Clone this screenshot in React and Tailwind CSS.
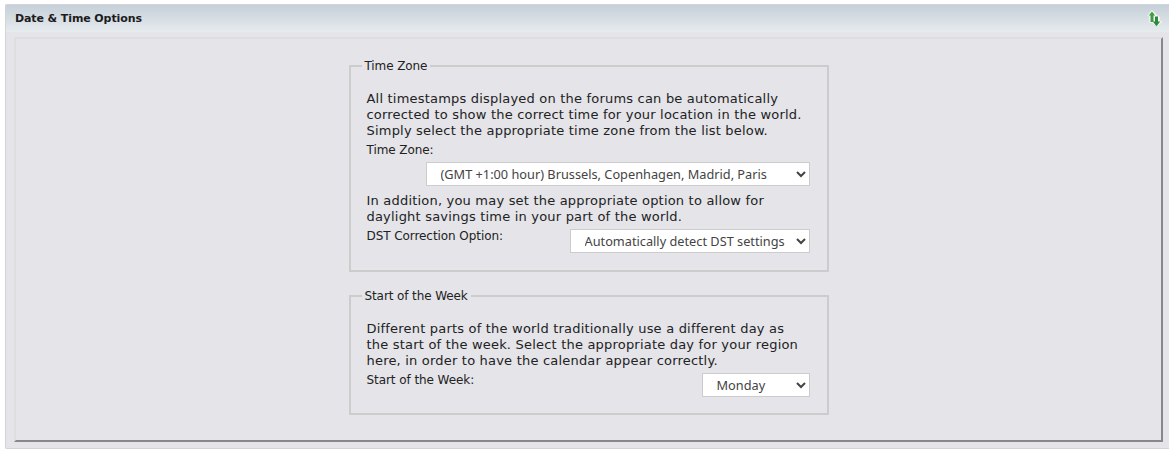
function SortIcon() {
  return (
    <svg width="16" height="17" viewBox="0 0 16 17" className="shrink-0">
      <path d="M5 0 L10 5 L13 7 L13 11 L16 11 L10 17 L5 13 L2 13 L2 6 L0 6 Z" fill="#f7f9f7" stroke="#dde3dd" strokeWidth="0.75" strokeLinejoin="round" />
      <path d="M5 1.5 L8.2 5.5 L6.5 5.5 L6.5 12 L3.5 12 L3.5 5.5 L1.8 5.5 Z" fill="#3f9c46" />
      <path d="M8 6.5 L11 6.5 L11 11.5 L13.2 11.5 L9.5 16.2 L5.8 11.5 L8 11.5 Z" fill="#2b8a3a" />
    </svg>
  );
}

function Dropdown({ value, width }) {
  return (
    <select
      defaultValue={value}
      className={`${width} h-[24px] rounded-none border border-[#cccccc] bg-white pl-[10px] font-["Noto_Sans",sans-serif] text-[12.75px] tracking-normal text-[#444444]`}
    >
      <option>{value}</option>
    </select>
  );
}

function Group({ title, children }) {
  return (
    <fieldset className="w-[480px] border-2 border-[#cccccc] pb-[16px] pl-[16px] pr-[17px] pt-[17px]">
      <legend className="ml-[-5px] px-[3px] text-[12px] leading-[16px] tracking-[-0.1px] text-[#222222]">{title}</legend>
      {children}
    </fieldset>
  );
}

export default function App() {
  return (
    <div className='h-[459px] w-[1169px] overflow-hidden bg-white pl-[5px] pt-[4px] font-["DejaVu_Sans",sans-serif] text-[12px] leading-[16px] tracking-[-0.07px] text-[#222222]'>
      <div className="h-[445px] rounded-l-[2px] border-b border-l border-t border-[#d4d4d8] bg-[#e4e4e9]">
        <div className="flex h-[27px] items-center justify-between bg-gradient-to-b from-[#c6d0d9] to-[#e6ebee] pl-[9px] pr-[6px]">
          <h2 className="text-[11px] font-bold tracking-[-0.1px] text-[#1c1c1c]">Date &amp; Time Options</h2>
          <SortIcon />
        </div>
        <div className="ml-[8px] mr-[6px] mt-[5px] flex h-[405px] flex-col items-center gap-[16px] border-2 border-b-[#888888] border-l-[#dedee0] border-r-[#888888] border-t-[#dedee0] pt-[19px]">
          <Group title="Time Zone">
            <p className="text-[13px] tracking-[0.2px]">
              All timestamps displayed on the forums can be automatically corrected to show the correct time for your location in the world. Simply select the appropriate time zone from the list below.
            </p>
            <div className="mt-[3px]">Time Zone:</div>
            <div className="mt-[4px] flex justify-end">
              <Dropdown value="(GMT +1:00 hour) Brussels, Copenhagen, Madrid, Paris" width="w-[384px]" />
            </div>
            <p className="mt-[7px] text-[13px] tracking-[0.2px]">
              In addition, you may set the appropriate option to allow for daylight savings time in your part of the world.
            </p>
            <div className="mb-[1px] mt-[4px] flex items-start justify-between">
              <span className="-mt-[1px]">DST Correction Option:</span>
              <Dropdown value="Automatically detect DST settings" width="w-[240px]" />
            </div>
          </Group>
          <Group title="Start of the Week">
            <p className="text-[13px] tracking-[0.2px]">
              Different parts of the world traditionally use a different day as the start of the week. Select the appropriate day for your region here, in order to have the calendar appear correctly.
            </p>
            <div className="mt-[4px] flex items-start justify-between">
              <span className="-mt-[1px]">Start of the Week:</span>
              <Dropdown value="Monday" width="w-[108px]" />
            </div>
          </Group>
        </div>
      </div>
    </div>
  );
}
